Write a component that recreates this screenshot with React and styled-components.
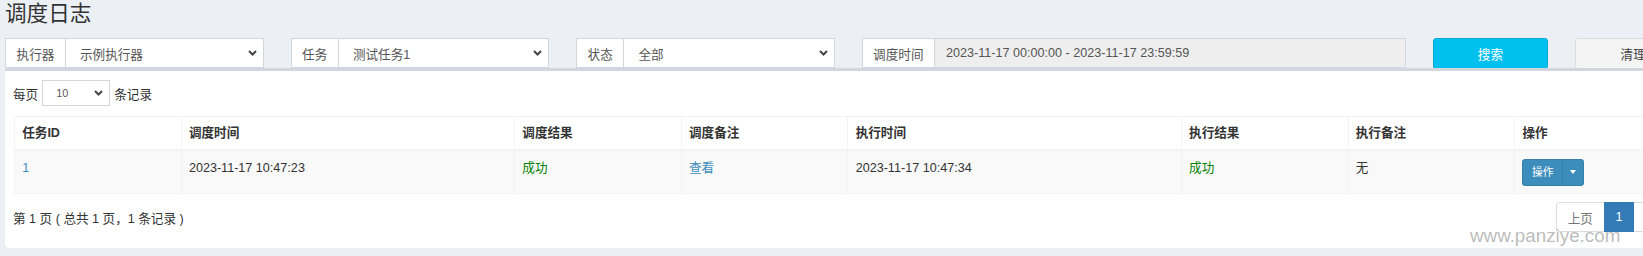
import React from "react";
import styled, { createGlobalStyle } from "styled-components";

const FONT = `"Liberation Sans", "Noto Sans CJK SC", sans-serif`;

const GlobalStyle = createGlobalStyle`
  html, body {
    margin: 0;
    padding: 0;
    background: #ecf0f5;
    overflow: hidden;
    font-family: ${FONT};
    font-size: 12.6px;
    color: #333;
  }
  * { box-sizing: border-box; }
`;

const Page = styled.div`
  position: relative;
  width: 1691px;
  padding-left: 5px;
`;

const Title = styled.h1`
  margin: 0;
  height: 38px;
  font-size: 21.6px;
  font-weight: 400;
  line-height: 27px;
  color: #333;
`;

const FilterRow = styled.div`
  display: grid;
  grid-template-columns: repeat(12, 1fr);
  column-gap: 27px;
  height: 30px;
`;

const InputGroup = styled.div`
  grid-column: span ${(p) => p.$span};
  display: flex;
  height: 30px;
`;

const Addon = styled.div`
  display: flex;
  align-items: center;
  padding: 0 10.6px;
  border: 1px solid #d2d6de;
  border-right: 0;
  background: #fff;
  color: #555;
  white-space: nowrap;
`;

const SelectBox = styled.div`
  flex: 1;
  display: flex;
  align-items: center;
  justify-content: space-between;
  padding: 0 6px 0 14px;
  border: 1px solid #d2d6de;
  background: ${(p) => (p.$readonly ? "#eee" : "#fff")};
  color: #555;
  white-space: nowrap;
  padding-left: ${(p) => (p.$readonly ? "11px" : "14px")};
`;

const Button = styled.div`
  grid-column: span 1;
  display: flex;
  align-items: center;
  justify-content: center;
  height: 31px;
  border-radius: 3px;
  border: 1px solid ${(p) => (p.$variant === "info" ? "#00acd6" : "#ddd")};
  background: ${(p) => (p.$variant === "info" ? "#00c0ef" : "#f4f4f4")};
  color: ${(p) => (p.$variant === "info" ? "#fff" : "#444")};
  white-space: nowrap;
`;

const Box = styled.div`
  position: relative;
  width: 1686px;
  background: #fff;
  border-top: 3px solid #d2d6de;
  border-radius: 3px;
  box-shadow: 0 1px 1px rgba(0, 0, 0, 0.1);
  padding: 9px 9px 16px 9px;
`;

const LengthRow = styled.div`
  display: flex;
  align-items: center;
  height: 26px;
  gap: 4px;
  margin-left: -1px;
  color: #333;
`;

const SmallSelect = styled.div`
  width: 68px;
  height: 26px;
  display: flex;
  align-items: center;
  justify-content: space-between;
  padding: 0 6px 0 13px;
  border: 1px solid #d2d6de;
  font-size: 10.8px;
  color: #555;
`;

const Table = styled.table`
  margin-top: 10px;
  width: 100%;
  table-layout: fixed;
  border-collapse: collapse;
  border: 1px solid #f4f4f4;
`;

const Th = styled.th`
  width: ${(p) => p.$w};
  padding: 7.2px;
  text-align: left;
  font-weight: 700;
  line-height: 18px;
  color: #333;
  border: 1px solid #f4f4f4;
  border-bottom-width: 2px;
  background: #fff;
`;

const Tr = styled.tr`
  background: #f9f9f9;
`;

const Td = styled.td`
  padding: 7.2px;
  vertical-align: top;
  line-height: 18px;
  font-weight: 400;
  border: 1px solid #f4f4f4;
  color: ${(p) =>
    p.$tone === "link" ? "#3c8dbc" : p.$tone === "success" ? "#008000" : "#333"};
`;

const BtnGroup = styled.div`
  display: inline-flex;
  height: 27px;
`;

const ActionBtn = styled.div`
  display: flex;
  align-items: center;
  justify-content: center;
  height: 27px;
  padding: 0 ${(p) => (p.$caret ? "0" : "8.5px")};
  width: ${(p) => (p.$caret ? "22px" : "auto")};
  margin-left: ${(p) => (p.$caret ? "-1px" : "0")};
  background: #3c8dbc;
  border: 1px solid #367fa9;
  color: #fff;
  font-size: 10.8px;
  border-radius: ${(p) => (p.$caret ? "0 2.7px 2.7px 0" : "2.7px 0 0 2.7px")};
`;

const Caret = styled.span`
  width: 0;
  height: 0;
  border-top: 4px solid #fff;
  border-left: 3.5px solid transparent;
  border-right: 3.5px solid transparent;
`;

const Footer = styled.div`
  display: flex;
  justify-content: space-between;
  align-items: center;
  margin-top: 8.7px;
`;

const Info = styled.div`
  margin-left: -1px;
  color: #333;
`;

const Pagination = styled.div`
  display: flex;
`;

const PageItem = styled.div`
  height: 29.3px;
  display: flex;
  align-items: center;
  padding: 0 10.8px;
  margin-left: -1px;
  border: 1px solid ${(p) => (p.$active ? "#337ab7" : "#ddd")};
  background: ${(p) => (p.$active ? "#337ab7" : "#fff")};
  color: ${(p) => (p.$active ? "#fff" : "#777")};
  position: ${(p) => (p.$active ? "relative" : "static")};
  &:first-child {
    margin-left: 0;
    border-radius: 3px 0 0 3px;
  }
  &:last-child {
    border-radius: 0 3px 3px 0;
  }
`;

const Watermark = styled.div`
  position: absolute;
  left: 1470px;
  top: 224px;
  font-family: "Liberation Sans", sans-serif;
  font-size: 18.8px;
  line-height: 24px;
  color: rgba(130, 130, 130, 0.55);
  white-space: nowrap;
  pointer-events: none;
`;

const Chevron = () => (
  <svg width="9" height="6" viewBox="0 0 9 6">
    <path d="M1 1 L4.5 4.5 L8 1" fill="none" stroke="#444" strokeWidth="2" />
  </svg>
);

const columns = [
  ["任务ID", "10%"],
  ["调度时间", "20%"],
  ["调度结果", "10%"],
  ["调度备注", "10%"],
  ["执行时间", "20%"],
  ["执行结果", "10%"],
  ["执行备注", "10%"],
  ["操作", "10%"],
];

export default function App() {
  return (
    <>
      <GlobalStyle />
      <Page>
        <Title>调度日志</Title>
        <FilterRow>
          <InputGroup $span={2}>
            <Addon>执行器</Addon>
            <SelectBox>
              示例执行器
              <Chevron />
            </SelectBox>
          </InputGroup>
          <InputGroup $span={2}>
            <Addon>任务</Addon>
            <SelectBox>
              测试任务1
              <Chevron />
            </SelectBox>
          </InputGroup>
          <InputGroup $span={2}>
            <Addon>状态</Addon>
            <SelectBox>
              全部
              <Chevron />
            </SelectBox>
          </InputGroup>
          <InputGroup $span={4}>
            <Addon>调度时间</Addon>
            <SelectBox $readonly>2023-11-17 00:00:00 - 2023-11-17 23:59:59</SelectBox>
          </InputGroup>
          <Button $variant="info">搜索</Button>
          <Button>清理</Button>
        </FilterRow>
        <Box>
          <LengthRow>
            每页
            <SmallSelect>
              10
              <Chevron />
            </SmallSelect>
            条记录
          </LengthRow>
          <Table>
            <thead>
              <tr>
                {columns.map(([label, w]) => (
                  <Th key={label} $w={w}>
                    {label}
                  </Th>
                ))}
              </tr>
            </thead>
            <tbody>
              <Tr>
                <Td $tone="link">1</Td>
                <Td>2023-11-17 10:47:23</Td>
                <Td $tone="success">成功</Td>
                <Td $tone="link">查看</Td>
                <Td>2023-11-17 10:47:34</Td>
                <Td $tone="success">成功</Td>
                <Td>无</Td>
                <Td>
                  <BtnGroup>
                    <ActionBtn>操作</ActionBtn>
                    <ActionBtn $caret>
                      <Caret />
                    </ActionBtn>
                  </BtnGroup>
                </Td>
              </Tr>
            </tbody>
          </Table>
          <Footer>
            <Info>第 1 页 ( 总共 1 页，1 条记录 )</Info>
            <Pagination>
              <PageItem>上页</PageItem>
              <PageItem $active>1</PageItem>
              <PageItem>下页</PageItem>
            </Pagination>
          </Footer>
        </Box>
        <Watermark>www.panziye.com</Watermark>
      </Page>
    </>
  );
}
